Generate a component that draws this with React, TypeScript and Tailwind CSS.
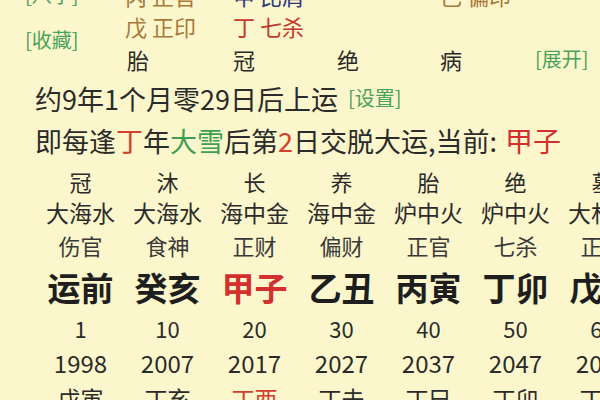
import React from "react";

const font = { fontFamily: '"Noto Sans CJK SC", "Noto Sans", sans-serif' };

const cols = [
  { s: "冠", n: "大海水", g: "伤官", gz: "运前", gzRed: false, age: "1", year: "1998", b: "戊寅", bRed: false },
  { s: "沐", n: "大海水", g: "食神", gz: "癸亥", gzRed: false, age: "10", year: "2007", b: "丁亥", bRed: false },
  { s: "长", n: "海中金", g: "正财", gz: "甲子", gzRed: true, age: "20", year: "2017", b: "丁酉", bRed: true },
  { s: "养", n: "海中金", g: "偏财", gz: "乙丑", gzRed: false, age: "30", year: "2027", b: "丁未", bRed: false },
  { s: "胎", n: "炉中火", g: "正官", gz: "丙寅", gzRed: false, age: "40", year: "2037", b: "丁巳", bRed: false },
  { s: "绝", n: "炉中火", g: "七杀", gz: "丁卯", gzRed: false, age: "50", year: "2047", b: "丁卯", bRed: false },
  { s: "墓", n: "大林木", g: "正印", gz: "戊辰", gzRed: false, age: "60", year: "2057", b: "丁丑", bRed: false },
];

export default function App() {
  return (
    <div className="w-[600px] h-[400px] overflow-hidden bg-[#fbf6cb] text-[#2b2b2b]" style={font}>
      <div className="mt-[-20px]">
        <div className="grid grid-cols-[125px_108px_102px_105px_95px_65px] h-[30px] items-center text-[22px] leading-none">
          <span className="pl-[25px] text-[#4aa35c] text-[20px]">[八字]</span>
          <span className="text-[#a8793a]">丙 正官</span>
          <span className="text-[#2f3a7a]">甲 比肩</span>
          <span></span>
          <span className="text-[#a8793a]">己 偏印</span>
          <span></span>
        </div>
        <div className="grid grid-cols-[125px_108px_102px_105px_95px_65px] grid-rows-[32px_34px] items-center text-[22px] leading-none">
          <span className="row-span-2 pl-[25px] pb-[6px] text-[#4aa35c] text-[20px] self-center">[收藏]</span>
          <span className="text-[#a8793a]">戊 正印</span>
          <span className="text-[#c0392b]">丁 七杀</span>
          <span></span>
          <span></span>
          <span></span>
          <span className="pl-[2px]">胎</span>
          <span>冠</span>
          <span className="pl-[2px]">绝</span>
          <span>病</span>
          <span className="text-[#4aa35c] text-[20px]">[展开]</span>
        </div>
        <div className="h-[44px] flex items-center pl-[35px] text-[27px] leading-none whitespace-nowrap">
          <span>约9年1个月零29日后上运</span>
          <span className="ml-[10px] text-[20px] text-[#4aa35c]">[设置]</span>
        </div>
        <div className="h-[40px] flex items-center pl-[35px] text-[27px] leading-none whitespace-nowrap">
          <span>即每逢</span>
          <span className="text-[#d0402e]">丁</span>
          <span>年</span>
          <span className="text-[#3f9e55]">大雪</span>
          <span>后第</span>
          <span className="text-[#d0402e]">2</span>
          <span>日交脱大运,当前:</span>
          <span className="ml-[8px] text-[#d32f2f] text-[28px]">甲子</span>
        </div>
      </div>
      <div className="mt-[6px] pl-[37px] grid grid-cols-[repeat(7,87px)] grid-rows-[30px_32px_34px_50px_32px_38px_32px] items-center text-center leading-none whitespace-nowrap">
        {cols.map((c) => (
          <div key={"s" + c.age} className="text-[22px]">{c.s}</div>
        ))}
        {cols.map((c) => (
          <div key={"n" + c.age} className="text-[23px]">{c.n}</div>
        ))}
        {cols.map((c) => (
          <div key={"g" + c.age} className="text-[22px] text-[#3a3a3a]">{c.g}</div>
        ))}
        {cols.map((c) => (
          <div key={"z" + c.age} className={"text-[33px] font-bold " + (c.gzRed ? "text-[#d32f2f]" : "text-[#1e1e1e]")}>{c.gz}</div>
        ))}
        {cols.map((c) => (
          <div key={"a" + c.age} className="text-[22px]">{c.age}</div>
        ))}
        {cols.map((c) => (
          <div key={"y" + c.age} className="text-[24px]">{c.year}</div>
        ))}
        {cols.map((c) => (
          <div key={"b" + c.age} className={"text-[23px] " + (c.bRed ? "text-[#d0402e]" : "")}>{c.b}</div>
        ))}
      </div>
    </div>
  );
}
